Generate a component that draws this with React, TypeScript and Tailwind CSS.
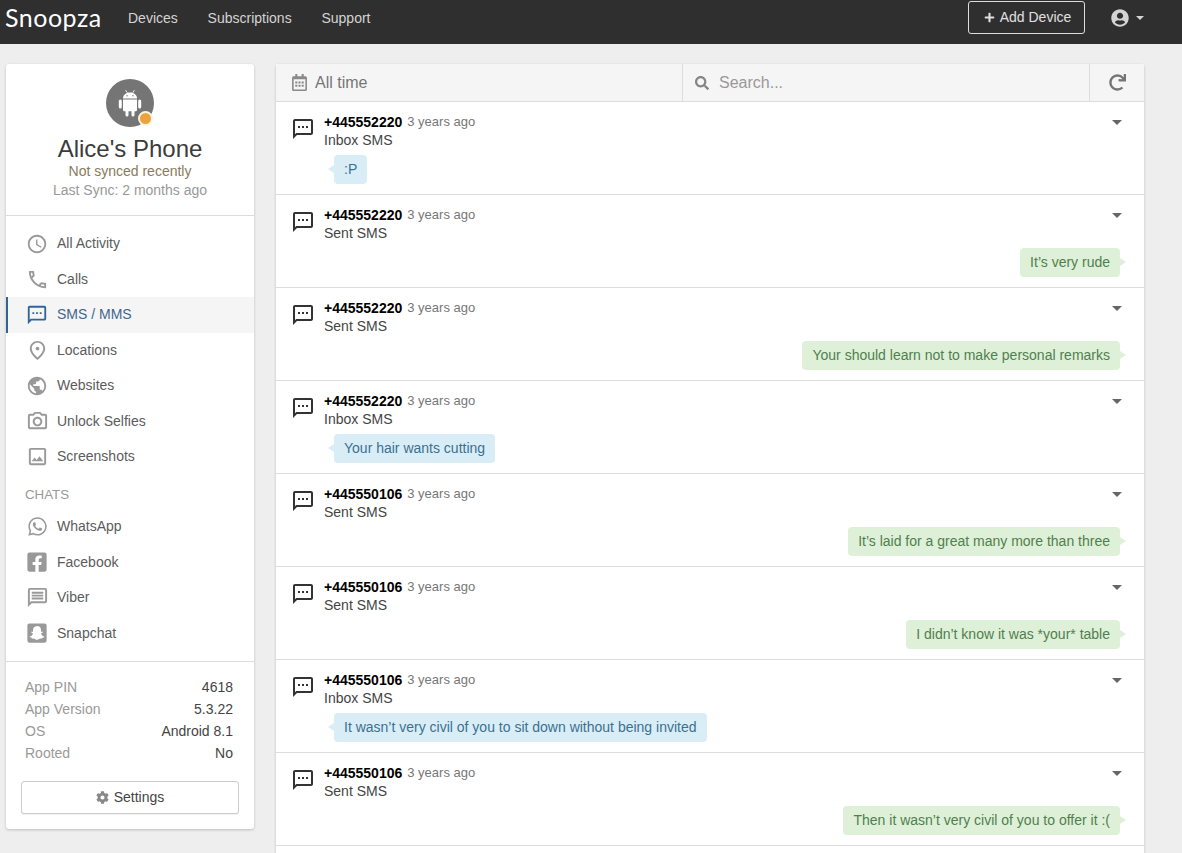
import type { ReactNode } from "react";
import {
  MdAccessTime,
  MdOutlineCall,
  MdOutlineImage,
  MdOutlineMessage,
  MdOutlinePhotoCamera,
  MdOutlinePlace,
  MdOutlineSms,
  MdPublic,
} from "react-icons/md";
import {
  FaCog,
  FaFacebookSquare,
  FaPlus,
  FaRedo,
  FaRegCalendarAlt,
  FaSearch,
  FaSnapchatSquare,
  FaUserCircle,
  FaWhatsapp,
} from "react-icons/fa";

type NavItem = { label: string; icon: ReactNode; active?: boolean };

const NAV: NavItem[] = [
  { label: "All Activity", icon: <MdAccessTime size={22} /> },
  { label: "Calls", icon: <MdOutlineCall size={23} /> },
  { label: "SMS / MMS", icon: <MdOutlineSms size={22} />, active: true },
  { label: "Locations", icon: <MdOutlinePlace size={23} /> },
  { label: "Websites", icon: <MdPublic size={22} /> },
  { label: "Unlock Selfies", icon: <MdOutlinePhotoCamera size={23} /> },
  { label: "Screenshots", icon: <MdOutlineImage size={23} /> },
];

const CHATS: NavItem[] = [
  { label: "WhatsApp", icon: <FaWhatsapp size={21} /> },
  { label: "Facebook", icon: <FaFacebookSquare size={22} /> },
  { label: "Viber", icon: <MdOutlineMessage size={23} /> },
  { label: "Snapchat", icon: <FaSnapchatSquare size={22} /> },
];

const INFO = [
  ["App PIN", "4618"],
  ["App Version", "5.3.22"],
  ["OS", "Android 8.1"],
  ["Rooted", "No"],
];

const MESSAGES = [
  { from: "+445552220", sent: false, text: ":P" },
  { from: "+445552220", sent: true, text: "It’s very rude" },
  { from: "+445552220", sent: true, text: "Your should learn not to make personal remarks" },
  { from: "+445552220", sent: false, text: "Your hair wants cutting" },
  { from: "+445550106", sent: true, text: "It’s laid for a great many more than three" },
  { from: "+445550106", sent: true, text: "I didn’t know it was *your* table" },
  { from: "+445550106", sent: false, text: "It wasn’t very civil of you to sit down without being invited" },
  { from: "+445550106", sent: true, text: "Then it wasn’t very civil of you to offer it :(" },
];

function AndroidIcon() {
  return (
    <svg width="26" height="28" viewBox="0 0 26 28" fill="currentColor">
      <path d="M6 9.5C6 6 9 3.5 13 3.5s7 2.5 7 6H6z" />
      <path d="M8.5 1l2 3.2M17.5 1l-2 3.2" stroke="currentColor" strokeWidth="0.8" fill="none" />
      <path d="M6 10.5h14v10.2c0 .9-.7 1.6-1.6 1.6H7.6c-.9 0-1.6-.7-1.6-1.6z" />
      <rect x="1.8" y="10.5" width="3" height="9" rx="1.5" />
      <rect x="21.2" y="10.5" width="3" height="9" rx="1.5" />
      <rect x="8.5" y="21" width="3" height="6.5" rx="1.5" />
      <rect x="14.5" y="21" width="3" height="6.5" rx="1.5" />
      <circle cx="10" cy="6.8" r="0.7" fill="#757575" />
      <circle cx="16" cy="6.8" r="0.7" fill="#757575" />
    </svg>
  );
}

function NavRow({ item }: { item: NavItem }) {
  return (
    <div
      className={`flex h-[35.5px] items-center border-l-2 pl-[17px] ${
        item.active ? "border-[#2f6596] bg-[#f5f5f5] text-[#3f6690]" : "border-transparent text-[#5c5c5c]"
      }`}
    >
      <span className={`flex w-[24px] justify-center ${item.active ? "text-[#2f6596]" : "text-[#999]"}`}>
        {item.icon}
      </span>
      <span className="ml-[8px]">{item.label}</span>
    </div>
  );
}

function Sidebar() {
  return (
    <aside className="h-[765px] w-[248px] shrink-0 rounded-[3px] bg-white shadow-[0_1px_3px_rgba(0,0,0,0.2)]">
      <div className="flex h-[152px] flex-col items-center border-b border-[#ddd] pt-[15px]">
        <div className="relative flex h-[48px] w-[48px] items-center justify-center rounded-full bg-[#757575] text-white">
          <AndroidIcon />
          <span className="absolute bottom-[1px] right-[1px] h-[15px] w-[15px] rounded-full border-2 border-[#fdf3e3] bg-[#eda33b]" />
        </div>
        <div className="mt-[7px] text-[24px] leading-[30px] text-[#3c3c3c]">Alice's Phone</div>
        <div className="mt-[-3px] leading-[20px] text-[#8a7a5c]">Not synced recently</div>
        <div className="leading-[18px] text-[#999]">Last Sync: 2 months ago</div>
      </div>
      <nav className="pt-[10px]">
        {NAV.map((item) => (
          <NavRow key={item.label} item={item} />
        ))}
        <div className="mt-[10px] mb-[4.5px] pl-[19px] text-[13.3px] leading-[20px] text-[#999]">CHATS</div>
        {CHATS.map((item) => (
          <NavRow key={item.label} item={item} />
        ))}
      </nav>
      <div className="mt-[10px] border-t border-[#ddd] pl-[19px] pr-[21px] pt-[14px] pb-[17px]">
        {INFO.map(([name, value]) => (
          <div key={name} className="flex h-[22px] items-center justify-between">
            <span className="text-[#999]">{name}</span>
            <span className="text-[#444]">{value}</span>
          </div>
        ))}
        <button className="mt-[17px] ml-[-4px] flex h-[33px] w-[218px] items-center justify-center gap-[5px] rounded-[3px] border border-[#ccc] bg-white text-[#444] shadow-[0_1px_1px_rgba(0,0,0,0.06)]">
          <FaCog size={13} className="text-[#888]" />
          Settings
        </button>
      </div>
    </aside>
  );
}

function Toolbar() {
  return (
    <div className="flex h-[38px] border-b border-[#ddd] bg-[#f5f5f5] text-[#757575]">
      <div className="flex w-[406px] items-center gap-[7px] pl-[15px] text-[16px]">
        <FaRegCalendarAlt size={17} className="text-[#8a8a8a]" />
        All time
      </div>
      <div className="flex w-[407px] items-center gap-[10px] border-l border-[#ddd] pl-[12px] text-[16px] text-[#999]">
        <FaSearch size={14} className="text-[#858585]" />
        Search...
      </div>
      <div className="flex flex-1 items-center justify-center border-l border-[#ddd]">
        <FaRedo size={17} className="text-[#757575]" />
      </div>
    </div>
  );
}

function Message({ from, sent, text }: { from: string; sent: boolean; text: string }) {
  return (
    <div className="flex h-[93px] shrink-0 border-b border-[#ddd] pl-[15px] pr-[24px] pt-[10px]">
      <MdOutlineSms size={24} className="mt-[5px] shrink-0 text-[#333]" />
      <div className="ml-[9px] flex-1">
        <div className="flex h-[20px] items-center">
          <span className="font-bold text-black">{from}</span>
          <span className="ml-[5px] text-[13px] text-[#777]">3 years ago</span>
          <span className="mr-[-2px] ml-auto h-0 w-0 border-x-[5px] border-t-[5px] border-x-transparent border-t-[#666]" />
        </div>
        <div className="mt-[-1px] leading-[18px] text-[#444]">{sent ? "Sent SMS" : "Inbox SMS"}</div>
        <div className={`mt-[6px] flex ${sent ? "justify-end" : "justify-start"}`}>
          <div
            className={`relative flex h-[29px] items-center rounded-[4px] ${sent ? "bg-[#dff0d8] text-[#4f7f4f]" : "ml-[10px] bg-[#d9edf7] text-[#3b7190]"} px-[10px]`}
          >
            {text}
            {sent ? (
              <span className="absolute right-[-6px] top-[10px] h-0 w-0 border-y-[4px] border-l-[6px] border-y-transparent border-l-[#dff0d8]" />
            ) : (
              <span className="absolute left-[-6px] top-[10px] h-0 w-0 border-y-[4px] border-r-[6px] border-y-transparent border-r-[#d9edf7]" />
            )}
          </div>
        </div>
      </div>
    </div>
  );
}

export default function App() {
  return (
    <div className="h-screen overflow-hidden bg-[#eeeeee] text-[14px] font-['Liberation_Sans',Arial,sans-serif]">
      <header className="flex h-[44px] items-start bg-[#2f2f2f] pr-[38px] text-[#d4d4d4]">
        <div className="flex h-[36px] w-[128px] items-center pl-[5px] text-[25px] tracking-[0.5px] text-white font-['Lato',sans-serif] font-normal">
          Snoopza
        </div>
        <div className="flex h-[36px] items-center gap-[29.8px]">
          <span>Devices</span>
          <span>Subscriptions</span>
          <span>Support</span>
        </div>
        <button className="mt-[1px] ml-auto flex h-[33px] w-[117px] items-center justify-center gap-[5px] rounded-[3px] border border-[#ddd] pl-[2px] text-[#e0e0e0]">
          <FaPlus size={11} />
          Add Device
        </button>
        <div className="mt-[9px] ml-[26px] flex items-center gap-[7px]">
          <FaUserCircle size={18} />
          <span className="h-0 w-0 border-x-[4px] border-t-[4px] border-x-transparent border-t-[#d4d4d4]" />
        </div>
      </header>
      <div className="flex items-start gap-[22px] pl-[6px] pt-[20px]">
        <Sidebar />
        <main className="w-[868px] rounded-t-[3px] bg-white shadow-[0_1px_3px_rgba(0,0,0,0.2)]">
          <Toolbar />
          {MESSAGES.map((m, i) => (
            <Message key={i} {...m} />
          ))}
          <div className="h-[10px]" />
        </main>
      </div>
    </div>
  );
}
